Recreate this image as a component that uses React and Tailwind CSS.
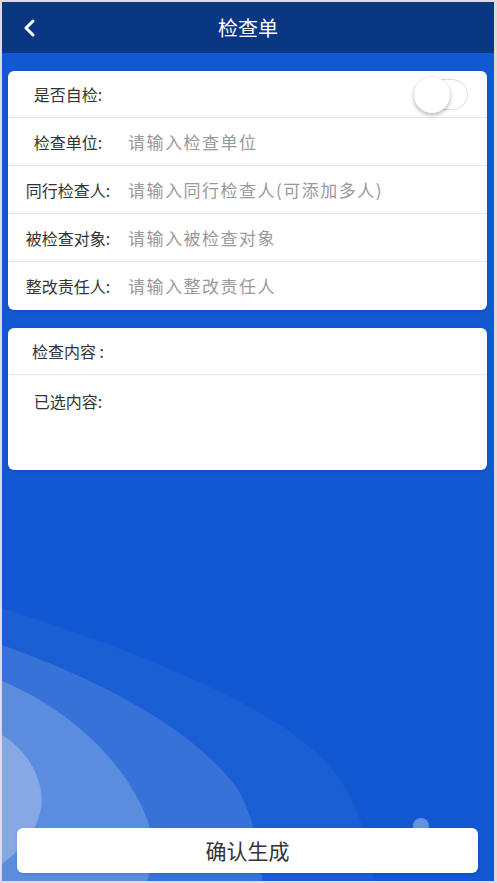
import React from 'react';

const font = { fontFamily: '"Microsoft YaHei", "Noto Sans CJK SC", sans-serif' };

function Row({ label, placeholder, last }) {
  return (
    <div className={`flex items-center h-[48px] ${last ? '' : 'border-b border-[#e8e8e8]'}`}>
      <div className="w-[120px] text-center text-[16px] text-[#333]">{label}</div>
      <div className="flex-1 text-[17px] tracking-[1.5px] text-[#999]">{placeholder}</div>
    </div>
  );
}

function Waves() {
  return (
    <svg className="absolute left-0 bottom-0" width="492" height="300" viewBox="0 583 492 300">
      <path d="M0 610 C 110 645, 260 700, 320 760 C 350 790, 365 830, 372 883 L0 883 Z" fill="#1a5ed4" />
      <path d="M0 647 C 100 683, 190 730, 235 790 C 250 815, 258 850, 260 883 L0 883 Z" fill="#3672d8" />
      <path d="M0 683 C 70 712, 130 770, 148 830 C 152 850, 150 870, 145 883 L0 883 Z" fill="#5b8ddf" />
      <path d="M0 737 C 30 755, 45 790, 38 815 C 32 838, 15 855, 0 866 Z" fill="#86a9e6" />
      <circle cx="419" cy="828" r="8" fill="#ffffff" fillOpacity="0.35" />
    </svg>
  );
}

export default function App() {
  return (
    <div className="w-[497px] h-[883px] bg-[#dcdcdc] pl-[2px] pt-[2px] pr-[3px] pb-[2px]" style={font}>
      <div className="flex flex-col h-full">
        {/* Header */}
        <div className="h-[51px] bg-[#0a3781] flex items-center relative shrink-0">
          <svg className="absolute left-[20px] top-[17px]" width="14" height="18" viewBox="0 0 14 18">
            <path d="M11 2 L4 9 L11 16" stroke="#fff" strokeWidth="3" fill="none" strokeLinecap="round" strokeLinejoin="round" />
          </svg>
          <div className="flex-1 text-center text-white text-[20px]">检查单</div>
        </div>

        {/* Body */}
        <div className="flex-1 relative bg-[#1158d2] pl-[6px] pr-[7px] pt-[18px] pb-[8px] flex flex-col overflow-hidden">
          <Waves />

          <div className="relative bg-white rounded-[6px] shadow-sm">
            <div className="flex items-center h-[47px] border-b border-[#e8e8e8]">
              <div className="w-[120px] text-center text-[16px] text-[#333]">是否自检:</div>
              <div className="flex-1" />
              <div className="relative w-[54px] h-[31px] rounded-full border border-[#dcdcdc] bg-white mr-[19px]">
                <div className="absolute -left-[1px] -top-[3px] w-[36px] h-[36px] rounded-full bg-white shadow-[0_2px_4px_rgba(0,0,0,0.3)]" />
              </div>
            </div>
            <Row label="检查单位:" placeholder="请输入检查单位" />
            <Row label="同行检查人:" placeholder="请输入同行检查人(可添加多人)" />
            <Row label="被检查对象:" placeholder="请输入被检查对象" />
            <Row label="整改责任人:" placeholder="请输入整改责任人" last />
          </div>

          <div className="relative bg-white rounded-[6px] shadow-sm mt-[18px] h-[142px]">
            <div className="flex items-center h-[47px] border-b border-[#e8e8e8]">
              <div className="w-[120px] text-center text-[16px] text-[#333]">检查内容 :</div>
            </div>
            <div className="w-[120px] text-center text-[16px] text-[#333] mt-[14px]">已选内容:</div>
          </div>

          <div className="flex-1" />

          <button className="relative mx-[9px] h-[45px] bg-white rounded-[6px] text-[21px] text-[#333] shadow-sm">
            确认生成
          </button>
        </div>
      </div>
    </div>
  );
}
